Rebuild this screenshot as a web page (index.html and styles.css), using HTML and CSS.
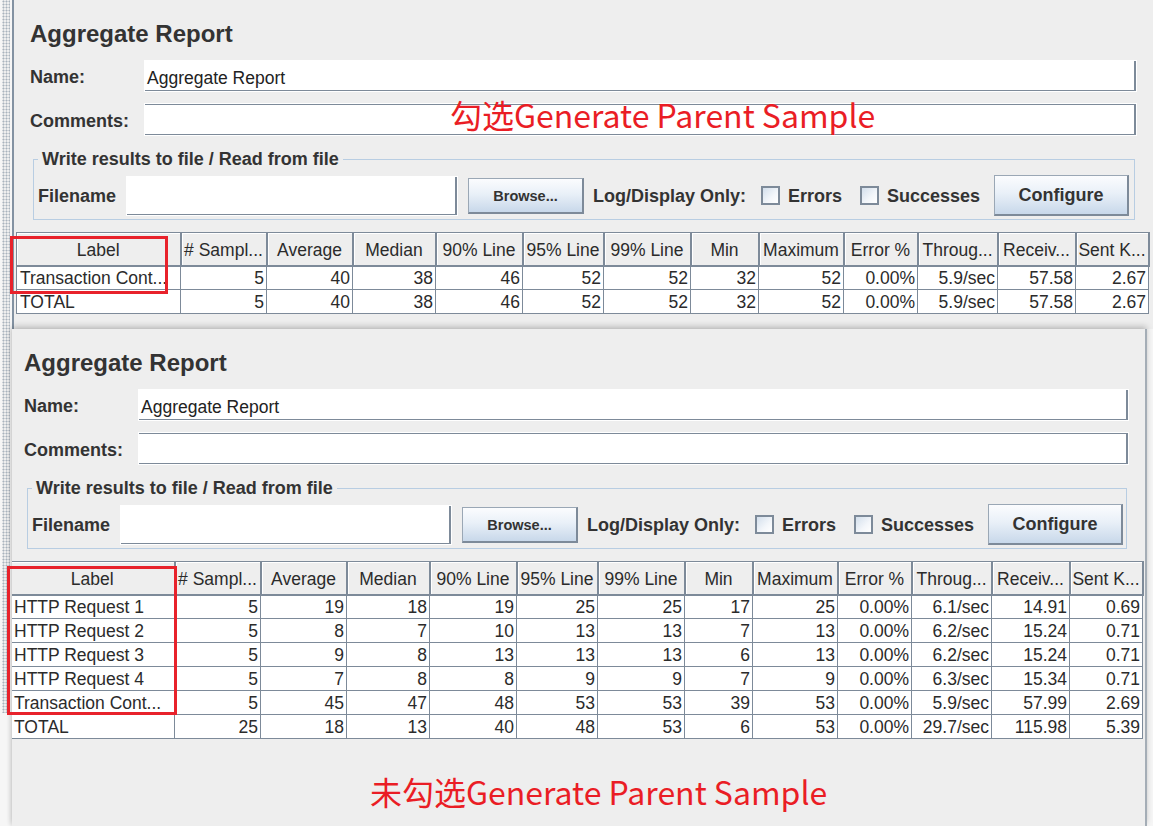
FILE: index.html
```html
<!DOCTYPE html>
<html lang="en">
<head>
<meta charset="utf-8">
<title>Aggregate Report</title>
<link rel="stylesheet" href="styles.css">
</head>
<body>
<div class="page">
  <div class="splitter"></div>
  <div class="main">
    <section class="panel panel-top">
      <h1 class="title">Aggregate Report</h1>
      <div class="form-row">
        <span class="label">Name:</span>
        <div class="input">Aggregate Report</div>
      </div>
      <div class="form-row comments">
        <span class="label">Comments:</span>
        <div class="input area"></div>
      </div>
      <fieldset class="file-box">
        <legend>Write results to file / Read from file</legend>
        <div class="file-row">
          <span class="fname">Filename</span>
          <div class="input file-input"></div>
          <button class="btn browse">Browse...</button>
          <span class="log">Log/Display Only:</span>
          <span class="check"></span>
          <span class="opt opt-err">Errors</span>
          <span class="check"></span>
          <span class="opt opt-suc">Successes</span>
          <button class="btn configure">Configure</button>
        </div>
      </fieldset>
      <table class="grid">
        <colgroup>
          <col class="c-label"><col class="c86"><col class="c86"><col class="c83"><col class="c87"><col class="c81"><col class="c87"><col class="c68"><col class="c85"><col class="c74"><col class="c80"><col class="c78"><col class="c73">
        </colgroup>
        <thead>
          <tr><th>Label</th><th># Sampl...</th><th>Average</th><th>Median</th><th>90% Line</th><th>95% Line</th><th>99% Line</th><th>Min</th><th>Maximum</th><th>Error %</th><th>Throug...</th><th>Receiv...</th><th>Sent K...</th></tr>
        </thead>
        <tbody>
          <tr><td>Transaction Cont...</td><td>5</td><td>40</td><td>38</td><td>46</td><td>52</td><td>52</td><td>32</td><td>52</td><td>0.00%</td><td>5.9/sec</td><td>57.58</td><td>2.67</td></tr>
          <tr><td>TOTAL</td><td>5</td><td>40</td><td>38</td><td>46</td><td>52</td><td>52</td><td>32</td><td>52</td><td>0.00%</td><td>5.9/sec</td><td>57.58</td><td>2.67</td></tr>
        </tbody>
      </table>
    </section>
    <section class="panel panel-bottom">
      <h1 class="title">Aggregate Report</h1>
      <div class="form-row">
        <span class="label">Name:</span>
        <div class="input">Aggregate Report</div>
      </div>
      <div class="form-row comments">
        <span class="label">Comments:</span>
        <div class="input area"></div>
      </div>
      <fieldset class="file-box">
        <legend>Write results to file / Read from file</legend>
        <div class="file-row">
          <span class="fname">Filename</span>
          <div class="input file-input"></div>
          <button class="btn browse">Browse...</button>
          <span class="log">Log/Display Only:</span>
          <span class="check"></span>
          <span class="opt opt-err">Errors</span>
          <span class="check"></span>
          <span class="opt opt-suc">Successes</span>
          <button class="btn configure">Configure</button>
        </div>
      </fieldset>
      <table class="grid">
        <colgroup>
          <col class="c-label"><col class="c86"><col class="c86"><col class="c83"><col class="c87"><col class="c81"><col class="c87"><col class="c68"><col class="c85"><col class="c74"><col class="c80"><col class="c78"><col class="c73">
        </colgroup>
        <thead>
          <tr><th>Label</th><th># Sampl...</th><th>Average</th><th>Median</th><th>90% Line</th><th>95% Line</th><th>99% Line</th><th>Min</th><th>Maximum</th><th>Error %</th><th>Throug...</th><th>Receiv...</th><th>Sent K...</th></tr>
        </thead>
        <tbody>
          <tr><td>HTTP Request 1</td><td>5</td><td>19</td><td>18</td><td>19</td><td>25</td><td>25</td><td>17</td><td>25</td><td>0.00%</td><td>6.1/sec</td><td>14.91</td><td>0.69</td></tr>
          <tr><td>HTTP Request 2</td><td>5</td><td>8</td><td>7</td><td>10</td><td>13</td><td>13</td><td>7</td><td>13</td><td>0.00%</td><td>6.2/sec</td><td>15.24</td><td>0.71</td></tr>
          <tr><td>HTTP Request 3</td><td>5</td><td>9</td><td>8</td><td>13</td><td>13</td><td>13</td><td>6</td><td>13</td><td>0.00%</td><td>6.2/sec</td><td>15.24</td><td>0.71</td></tr>
          <tr><td>HTTP Request 4</td><td>5</td><td>7</td><td>8</td><td>8</td><td>9</td><td>9</td><td>7</td><td>9</td><td>0.00%</td><td>6.3/sec</td><td>15.34</td><td>0.71</td></tr>
          <tr><td>Transaction Cont...</td><td>5</td><td>45</td><td>47</td><td>48</td><td>53</td><td>53</td><td>39</td><td>53</td><td>0.00%</td><td>5.9/sec</td><td>57.99</td><td>2.69</td></tr>
          <tr><td>TOTAL</td><td>25</td><td>18</td><td>13</td><td>40</td><td>48</td><td>53</td><td>6</td><td>53</td><td>0.00%</td><td>29.7/sec</td><td>115.98</td><td>5.39</td></tr>
        </tbody>
      </table>
    </section>
  </div>
  <div class="mark mark-top"></div>
  <div class="mark mark-bottom"></div>
  <p class="note note-top">勾选Generate Parent Sample</p>
  <p class="note note-bottom">未勾选Generate Parent Sample</p>
</div>
</body>
</html>
```

FILE: styles.css
```css
* { box-sizing: border-box; }

html, body {
  margin: 0;
  padding: 0;
  background: #f6f6f6;
}

body {
  width: 1153px;
  height: 826px;
  overflow: hidden;
  font-family: "Liberation Sans", Arial, sans-serif;
  color: #333333;
}

.page {
  position: relative;
  display: flex;
  align-items: flex-start;
  width: 1153px;
  height: 826px;
}

.splitter {
  flex: 0 0 14px;
  height: 713px;
  background-color: #eeeeee;
  background-image:
    radial-gradient(circle, #a9b3bd 0.9px, transparent 1.1px);
  background-size: 3px 3px;
  background-position: 2px 0;
  background-repeat: repeat;
  background-clip: content-box;
  padding: 0 2px 0 2px;
  border-right: 2px solid #8392a2;
}

.main {
  flex: 1 1 auto;
  display: flex;
  flex-direction: column;
  min-width: 0;
}

.panel {
  background: #eeeeee;
  padding-top: 19px;
  overflow: hidden;
}

.panel-top {
  --inset: 16px;
  width: 1139px;
  height: 329px;
}

.panel-bottom {
  --inset: 12px;
  width: 1135px;
  height: 497px;
  margin-left: -2px;
  border-right: 2px solid #a4adb6;
  box-shadow: 0 -3px 6px rgba(0, 0, 0, 0.18), -2px 0 4px rgba(0, 0, 0, 0.08);
  position: relative;
}

.title {
  margin: 0 0 0 var(--inset);
  font-size: 24px;
  font-weight: bold;
  line-height: 30px;
  color: #333333;
}

.form-row {
  display: flex;
  align-items: center;
  height: 30px;
  margin: 12px 17px 0 var(--inset);
}

.form-row.comments {
  height: 31px;
  margin-top: 13px;
}

.label {
  flex: 0 0 115px;
  font-size: 18px;
  font-weight: bold;
  padding-top: 3px;
}

.input {
  flex: 1 1 auto;
  height: 100%;
  background: #ffffff;
  border-right: 2px solid #7d8a99;
  border-bottom: 1px solid #7d8a99;
  box-shadow: 0 0 0 1px #ffffff;
  font-size: 17.5px;
  line-height: 29px;
  padding: 3px 0 0 2px;
  color: #222222;
}

.input.area {
  border-top: 1px solid #7d8a99;
}

.file-box {
  margin: 13px 18px 0 calc(var(--inset) + 3px);
  padding: 5px 4px 3px 4px;
  border: 1px solid #b8cde2;
  min-width: 0;
}

.file-box legend {
  padding: 0 4px;
  margin: 0;
  font-size: 18px;
  font-weight: bold;
  line-height: 22px;
}

.file-row {
  display: flex;
  align-items: center;
  height: 41px;
}

.fname {
  flex: 0 0 89px;
  font-size: 18px;
  font-weight: bold;
  padding-top: 2px;
}

.file-input {
  flex: 0 0 330px;
  height: 38px;
}

.btn {
  height: 36px;
  margin: 0;
  padding: 0;
  font-family: "Liberation Sans", Arial, sans-serif;
  font-weight: bold;
  color: #333333;
  background: linear-gradient(#fbfcfe 0%, #e9f0f8 45%, #c8d8ea 100%);
  border: 1px solid #9aa7b5;
  border-right: 2px solid #7d8a99;
  border-bottom: 2px solid #7d8a99;
}

.browse {
  flex: 0 0 116px;
  margin-left: 11px;
  font-size: 14.5px;
  padding-top: 2px;
}

.configure {
  flex: 0 0 135px;
  height: 41px;
  font-size: 18px;
}

.log {
  flex: 0 0 168px;
  margin-left: 9px;
  font-size: 18px;
  font-weight: bold;
  padding-top: 2px;
}

.check {
  flex: 0 0 19px;
  height: 19px;
  margin-right: 8px;
  border: 2px solid #7d8a99;
  background: linear-gradient(135deg, #d3dfec 0%, #f3f6fa 60%, #ffffff 100%);
}

.opt {
  font-size: 18px;
  font-weight: bold;
  padding-top: 2px;
}

.opt-err { flex: 0 0 72px; }
.opt-suc { flex: 0 0 107px; }

.grid {
  margin: 12px 0 0 calc(var(--inset) - 14px);
  width: 1132px;
  table-layout: fixed;
  border-collapse: collapse;
  font-size: 17.5px;
  color: #2b2b2b;
}

.c-label { width: 164px; }
.c86 { width: 86px; }
.c83 { width: 83px; }
.c87 { width: 87px; }
.c81 { width: 81px; }
.c68 { width: 68px; }
.c85 { width: 85px; }
.c74 { width: 74px; }
.c80 { width: 80px; }
.c78 { width: 78px; }
.c73 { width: 73px; }

.grid th {
  height: 33px;
  padding: 3px 1px 0 1px;
  font-weight: normal;
  text-align: center;
  white-space: nowrap;
  overflow: hidden;
  background: #eeeeee;
  border: 1px solid #7d8a99;
  border-right-width: 2px;
  border-bottom-width: 2px;
  box-shadow: inset 1px 1px 0 #ffffff;
}

.grid td {
  height: 24px;
  padding: 0 2px 0 3px;
  text-align: right;
  white-space: nowrap;
  overflow: hidden;
  background: #ffffff;
  border: 1px solid #7d8a99;
  line-height: 22px;
}

.grid td:first-child {
  text-align: left;
}

.mark {
  position: absolute;
  border: 3px solid #e8222b;
  pointer-events: none;
}

.mark-top {
  left: 10px;
  top: 236px;
  width: 158px;
  height: 58px;
}

.mark-bottom {
  left: 7px;
  top: 566px;
  width: 170px;
  height: 149px;
}

.note {
  position: absolute;
  margin: 0;
  font-family: "Noto Sans CJK SC", "Noto Sans", sans-serif;
  font-size: 32px;
  line-height: 40px;
  color: #ea1d25;
  white-space: nowrap;
}

.note-top {
  left: 450px;
  top: 94px;
}

.note-bottom {
  left: 370px;
  top: 771px;
}
```
